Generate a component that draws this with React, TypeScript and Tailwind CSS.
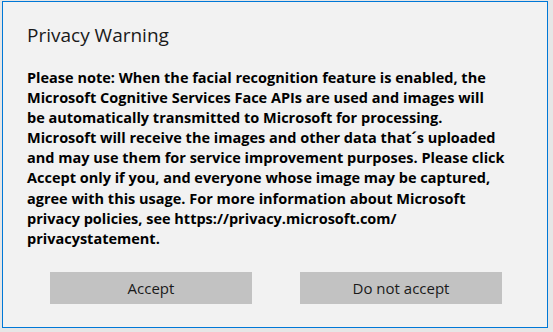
import React from "react";

const lines = [
  "Please note: When the facial recognition feature is enabled, the",
  "Microsoft Cognitive Services Face APIs are used and images will",
  "be automatically transmitted to Microsoft for processing.",
  "Microsoft will receive the images and other data that\u00b4s uploaded",
  "and may use them for service improvement purposes. Please click",
  "Accept only if you, and everyone whose image may be captured,",
  "agree with this usage. For more information about Microsoft",
  "privacy policies, see https://privacy.microsoft.com/",
  "privacystatement.",
];

export default function App() {
  return (
    <div className="w-[553px] h-[332px] bg-[#e6e6e6] pl-[2px] pt-[1px] overflow-hidden" style={{ fontFamily: '"Open Sans", "Noto Sans", sans-serif' }}>
      <div className="w-[546px] h-[327px] bg-[#f2f2f2] border border-[#0078d7] flex flex-col pl-[24px]">
        <div className="mt-[20px] text-[19px] leading-[26px] text-[#1a1a1a] font-normal">Privacy Warning</div>
        <div className="mt-[20px] text-[14.5px] leading-[20.1px] font-bold text-black">
          {lines.map((l, i) => (
            <div key={i} className="whitespace-nowrap">{l}</div>
          ))}
        </div>
        <div className="mt-[23px] flex gap-[48px] pl-[23px]">
          <button className="w-[202px] h-[32px] bg-[#c2c2c2] text-[15px] text-[#1a1a1a]">Accept</button>
          <button className="w-[202px] h-[32px] bg-[#c2c2c2] text-[15px] text-[#1a1a1a]">Do not accept</button>
        </div>
      </div>
    </div>
  );
}
